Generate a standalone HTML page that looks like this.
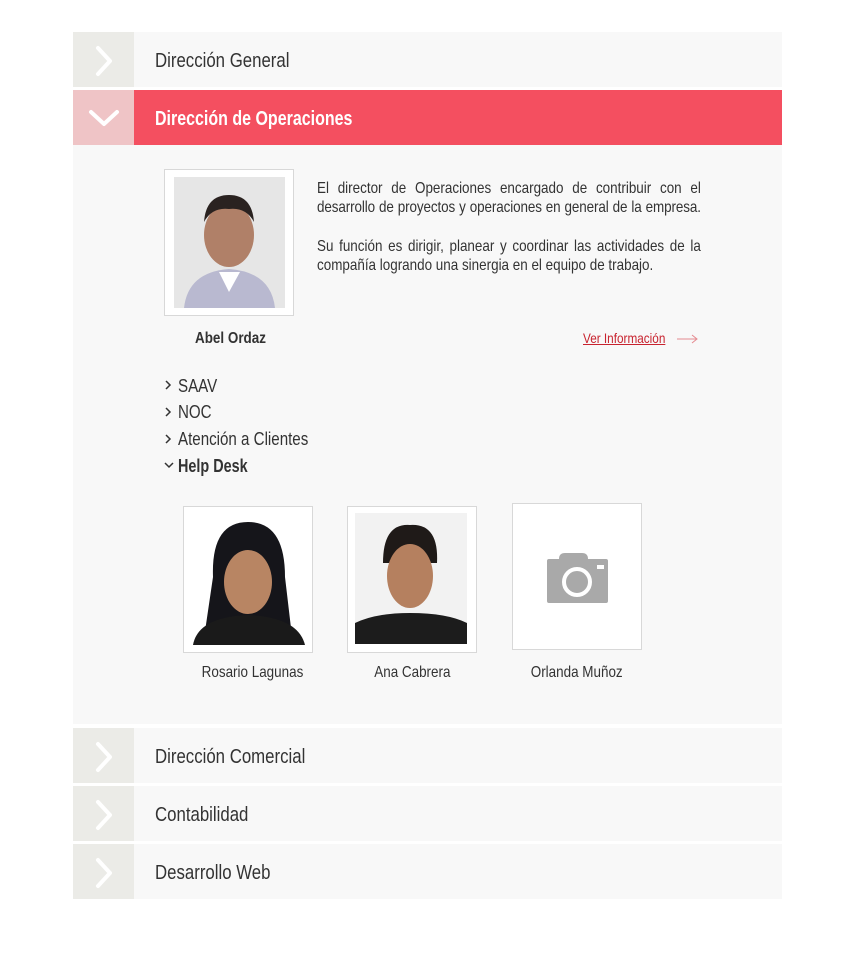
<!DOCTYPE html>
<html><head><meta charset="utf-8">
<style>
*{margin:0;padding:0;box-sizing:border-box}
body{width:856px;height:953px;background:#fff;position:relative;font-family:"Liberation Sans",sans-serif;color:#333;overflow:hidden}
.a{position:absolute}
.s{display:inline-block;transform:scaleX(.84);transform-origin:left center;white-space:nowrap}
.row{position:absolute;left:73px;width:709px;height:55px;background:#f8f8f8}
.row .ic{position:absolute;left:0;top:0;width:61px;height:55px;background:#ebebe7}
.row .t{position:absolute;left:82px;top:0;line-height:58px;font-size:20px;color:#333}
.frame{position:absolute;background:#fff;border:1px solid #d8d8d8}
.name{position:absolute;font-size:16px;color:#333;text-align:center;width:160px}
.name span{display:inline-block;transform:scaleX(.84);white-space:nowrap}
.sub{position:absolute;left:178px;font-size:18px;color:#333}
.car{position:absolute;left:164px}
.ln{position:absolute;left:317px;width:457px;font-size:16px;line-height:19px;transform:scaleX(.84);transform-origin:left top;white-space:nowrap}
.j{text-align:justify;text-align-last:justify}
</style></head><body>

<div class="row" style="top:32px"><div class="ic"><svg width="61" height="55"><polyline points="25,16 37,29 25,42" fill="none" stroke="#fff" stroke-width="4" stroke-linecap="round" stroke-linejoin="round"/></svg></div><div class="t"><span class="s">Dirección General</span></div></div>

<div class="row" style="top:90px;background:#f44f60"><div class="ic" style="background:#efc4c6"><svg width="61" height="55"><polyline points="18,22 31,34 44,22" fill="none" stroke="#fff" stroke-width="4" stroke-linecap="round" stroke-linejoin="round"/></svg></div><div class="t" style="color:#fff;font-weight:bold;font-size:20px"><span class="s" style="transform:scaleX(.8)">Dirección de Operaciones</span></div></div>

<div class="a" style="left:73px;top:145px;width:709px;height:579px;background:#f8f8f8"></div>

<div class="frame" style="left:164px;top:169px;width:130px;height:147px">
<svg class="a" style="left:9px;top:7px" width="111" height="131"><rect width="111" height="131" fill="#e6e6e6"/><path d="M10 131 Q14 95 55 92 Q97 95 101 131Z" fill="#b9b9d0"/><path d="M45 95 L55 115 L66 95Z" fill="#fff"/><ellipse cx="55" cy="58" rx="25" ry="32" fill="#b08068"/><path d="M30 45 Q32 18 55 18 Q78 18 80 45 Q72 30 55 32 Q38 30 30 45Z" fill="#2a2220"/></svg>
</div>
<div class="a" style="left:195px;top:330px;font-size:16px;font-weight:bold;color:#333"><span class="s">Abel Ordaz</span></div>

<div class="ln j" style="top:179px">El director de Operaciones encargado de contribuir con el</div>
<div class="ln j" style="top:198px;letter-spacing:-0.12px">desarrollo de proyectos y operaciones en general de la empresa.</div>
<div class="ln j" style="top:237px">Su función es dirigir, planear y coordinar las actividades de la</div>
<div class="ln" style="top:256px">compañía logrando una sinergia en el equipo de trabajo.</div>

<div class="a" style="left:583px;top:330px;font-size:14px;color:#c8232f;text-decoration:underline"><span class="s" style="text-decoration:underline">Ver Información</span></div>
<svg class="a" style="left:677px;top:333px" width="22" height="12"><path d="M0 6H20M15 2L20 6L15 10" fill="none" stroke="#e58a90" stroke-width="1"/></svg>

<svg class="car" style="top:380px" width="8" height="10"><polyline points="2,1 6,5 2,9" fill="none" stroke="#333" stroke-width="1.5"/></svg>
<div class="sub" style="top:376px"><span class="s">SAAV</span></div>
<svg class="car" style="top:407px" width="8" height="10"><polyline points="2,1 6,5 2,9" fill="none" stroke="#333" stroke-width="1.5"/></svg>
<div class="sub" style="top:402px"><span class="s">NOC</span></div>
<svg class="car" style="top:434px" width="8" height="10"><polyline points="2,1 6,5 2,9" fill="none" stroke="#333" stroke-width="1.5"/></svg>
<div class="sub" style="top:429px"><span class="s">Atención a Clientes</span></div>
<svg class="car" style="top:461px" width="10" height="8"><polyline points="1,2 5,6 9,2" fill="none" stroke="#333" stroke-width="1.5"/></svg>
<div class="sub" style="top:456px;font-weight:bold"><span class="s" style="transform:scaleX(.8)">Help Desk</span></div>

<div class="frame" style="left:183px;top:506px;width:130px;height:147px">
<svg class="a" style="left:9px;top:10px" width="112" height="128"><rect width="112" height="128" fill="#fff"/><path d="M20 60 Q18 5 55 5 Q92 5 92 60 L100 128 L10 128Z" fill="#15151a"/><path d="M0 128 Q5 100 55 98 Q105 100 112 128Z" fill="#1a1a1a"/><ellipse cx="55" cy="65" rx="24" ry="32" fill="#b88563"/></svg>
</div>
<div class="name" style="left:172px;top:664px"><span>Rosario Lagunas</span></div>

<div class="frame" style="left:347px;top:506px;width:130px;height:147px">
<svg class="a" style="left:7px;top:6px" width="112" height="131"><rect width="112" height="131" fill="#f2f2f2"/><path d="M28 50 Q28 10 55 12 Q84 10 82 50Z" fill="#1f1a18"/><ellipse cx="55" cy="63" rx="23" ry="32" fill="#b5805f"/><path d="M0 131 L0 110 Q20 100 55 100 Q92 100 112 110 L112 131Z" fill="#1c1c1c"/></svg>
</div>
<div class="name" style="left:332px;top:664px"><span>Ana Cabrera</span></div>

<div class="frame" style="left:512px;top:503px;width:130px;height:147px">
<svg class="a" style="left:33px;top:47px" width="63" height="53"><path d="M13 8 Q13 2 19 2 L36 2 Q42 2 42 8 L60 8 Q62 8 62 10 L62 50 Q62 52 60 52 L3 52 Q1 52 1 50 L1 10 Q1 8 3 8Z" fill="#a9a9a9"/><circle cx="31" cy="31" r="13" fill="none" stroke="#fff" stroke-width="4"/><rect x="51" y="14" width="7" height="4" fill="#fff"/></svg>
</div>
<div class="name" style="left:497px;top:664px"><span>Orlanda Muñoz</span></div>

<div class="row" style="top:728px"><div class="ic"><svg width="61" height="55"><polyline points="25,16 37,29 25,42" fill="none" stroke="#fff" stroke-width="4" stroke-linecap="round" stroke-linejoin="round"/></svg></div><div class="t"><span class="s">Dirección Comercial</span></div></div>
<div class="row" style="top:786px"><div class="ic"><svg width="61" height="55"><polyline points="25,16 37,29 25,42" fill="none" stroke="#fff" stroke-width="4" stroke-linecap="round" stroke-linejoin="round"/></svg></div><div class="t"><span class="s">Contabilidad</span></div></div>
<div class="row" style="top:844px"><div class="ic"><svg width="61" height="55"><polyline points="25,16 37,29 25,42" fill="none" stroke="#fff" stroke-width="4" stroke-linecap="round" stroke-linejoin="round"/></svg></div><div class="t"><span class="s">Desarrollo Web</span></div></div>

</body></html>
